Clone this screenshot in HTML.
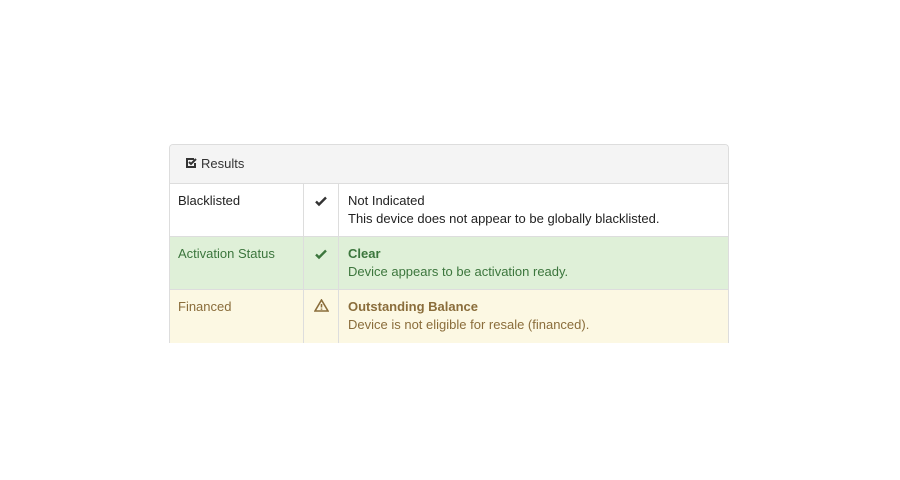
<!DOCTYPE html>
<html><head><style>
body{margin:0;width:900px;height:480px;background:#fff;font-family:"Liberation Sans",sans-serif;font-size:13px;color:#222;position:relative;overflow:hidden}
.p{position:absolute;left:169px;top:144px;width:558px;height:198px;border:1px solid #ddd;border-bottom:none;border-radius:4px 4px 0 0;overflow:hidden}
.h{height:38px;background:#f4f4f4;border-bottom:1px solid #ddd;font-size:13px;line-height:38px;padding-left:15px;color:#333}
.r{height:52px;border-bottom:1px solid #ddd;position:relative}
.r.last{border-bottom:none;height:60px}
.c{position:absolute;top:0;bottom:0}
.c1{left:0;width:134px;padding:8px 0 0 8px;box-sizing:border-box;border-right:1px solid #ddd;line-height:18px}
.c2{left:134px;width:35px;border-right:1px solid #ddd;text-align:center;padding-top:11px;box-sizing:border-box}
.c3{left:170px;right:0;padding:8px 0 0 8px;box-sizing:border-box;line-height:18px}
b{font-weight:normal}
.g{background:#dff0d8;color:#3c763d}.g b{font-weight:bold}
.y{background:#fcf8e3;color:#8a6d3b}.y b{font-weight:bold}
</style></head><body>
<div class="p">
<div class="h"><svg width="12" height="12" viewBox="0 0 12 12" style="vertical-align:-1px;margin-right:4px"><path d="M9 2H2v8h8V6" fill="none" stroke="#333" stroke-width="2"/><path d="M4 5l2 2 5-5" fill="none" stroke="#333" stroke-width="2"/></svg>Results</div>
<div class="r"><div class="c c1">Blacklisted</div><div class="c c2"><svg width="12" height="11" viewBox="0 0 12 11"><path d="M1 5.5l3 3 7-7" fill="none" stroke="#333" stroke-width="2.4"/></svg></div><div class="c c3"><b style="color:#222">Not Indicated</b><br>This device does not appear to be globally blacklisted.</div></div>
<div class="r g"><div class="c c1">Activation Status</div><div class="c c2"><svg width="12" height="11" viewBox="0 0 12 11"><path d="M1 5.5l3 3 7-7" fill="none" stroke="#3c763d" stroke-width="2.4"/></svg></div><div class="c c3"><b>Clear</b><br>Device appears to be activation ready.</div></div>
<div class="r y last"><div class="c c1">Financed</div><div class="c c2" style="padding-top:9px"><svg width="15" height="13" viewBox="0 0 15 13"><path d="M7.5 1L14 12H1z" fill="none" stroke="#8a6d3b" stroke-width="1.6"/><path d="M7.5 5v3.5M7.5 9.5v1.3" stroke="#8a6d3b" stroke-width="1.6"/></svg></div><div class="c c3"><b>Outstanding Balance</b><br>Device is not eligible for resale (financed).</div></div>
</div>
</body></html>
